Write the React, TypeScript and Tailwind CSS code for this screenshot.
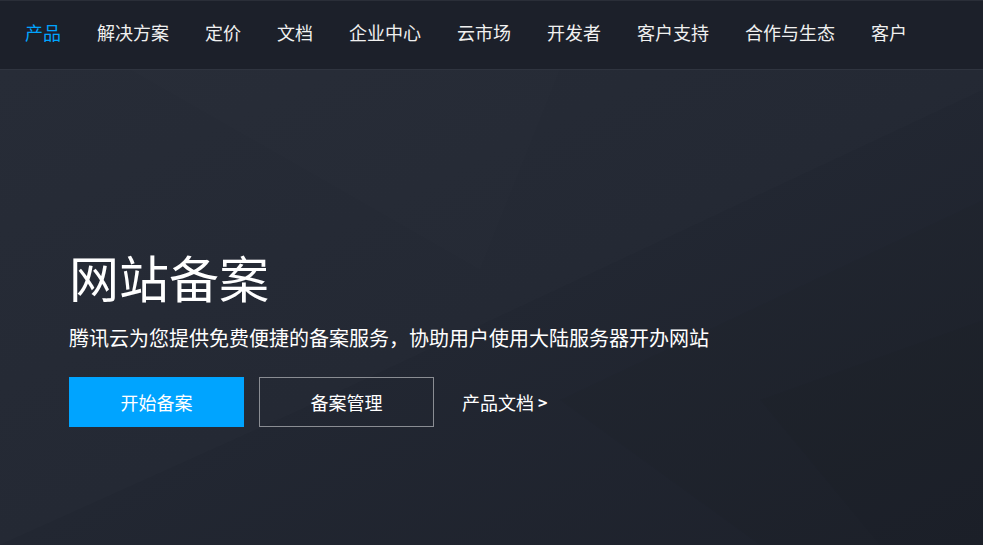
const navItems = ["产品", "解决方案", "定价", "文档", "企业中心", "云市场", "开发者", "客户支持", "合作与生态", "客户"];

function Facets() {
  // faint diagonal planes in the hero background
  return (
    <svg className="absolute inset-0 w-full h-full" viewBox="0 0 983 475" preserveAspectRatio="none">
      <polygon points="0,0 983,0 983,20 300,340 0,475" fill="#ffffff" fillOpacity="0.012" />
      <polygon points="130,0 560,0 480,200" fill="#ffffff" fillOpacity="0.006" />
      <polygon points="560,330 983,130 983,475 760,475" fill="#000000" fillOpacity="0.025" />
      <polygon points="760,330 983,250 983,475 880,475" fill="#000000" fillOpacity="0.025" />
    </svg>
  );
}

export default function App() {
  return (
    <div
      className="w-[983px] h-[545px] overflow-hidden bg-[#21252f] text-white"
      style={{ fontFamily: '"Noto Sans CJK SC", "Noto Sans", sans-serif' }}
    >
      {/* Top nav */}
      <header className="h-[70px] bg-[#1c202a] border-t border-[#2a2e38] border-b border-b-[#2f343f] flex items-center pl-[25px] pb-[6px]">
        <nav className="flex items-center gap-[36px]">
          {navItems.map((item, i) => (
            <span
              key={item}
              className={`text-[18px] leading-none ${i === 0 ? "text-[#00a4ff]" : "text-[#f0f0f0]"}`}
            >
              {item}
            </span>
          ))}
        </nav>
      </header>

      {/* Hero */}
      <section className="relative h-[475px] bg-gradient-to-br from-[#252a35] via-[#222732] to-[#1d212b]">
        <Facets />
        <div className="relative pl-[69px] pt-[176px]">
          <h1 className="text-[50px] leading-[60px] font-normal text-white">网站备案</h1>
          <p className="mt-[17px] text-[20px] leading-[30px] text-white">
            腾讯云为您提供免费便捷的备案服务，协助用户使用大陆服务器开办网站
          </p>
          <div className="mt-[24px] flex items-center">
            <button className="w-[175px] h-[50px] bg-[#00a4ff] text-[18px] text-white">开始备案</button>
            <button className="ml-[15px] w-[175px] h-[50px] border border-[#8a8d93] text-[18px] text-white">
              备案管理
            </button>
            <a className="ml-[28px] text-[18px] text-white flex items-center gap-[4px]">
              产品文档
              <span className="font-bold text-[16px]">&gt;</span>
            </a>
          </div>
        </div>
      </section>
    </div>
  );
}
